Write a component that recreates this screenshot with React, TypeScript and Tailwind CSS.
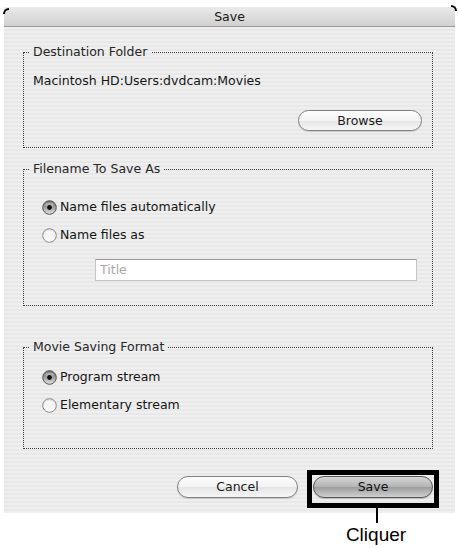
const Radio = ({ checked = false }: { checked?: boolean }) => (
  <svg width="15" height="15" viewBox="0 0 15 15" className="shrink-0">
    <defs>
      <linearGradient id="radio-on" x1="0" y1="0" x2="0" y2="1">
        <stop offset="0" stopColor="#6a6a6a" />
        <stop offset="0.5" stopColor="#a0a0a0" />
        <stop offset="1" stopColor="#e4e4e4" />
      </linearGradient>
      <linearGradient id="radio-off" x1="0" y1="0" x2="0" y2="1">
        <stop offset="0" stopColor="#dcdcdc" />
        <stop offset="0.5" stopColor="#f4f4f4" />
        <stop offset="1" stopColor="#ffffff" />
      </linearGradient>
    </defs>
    <circle
      cx="7.5"
      cy="7.5"
      r="6.8"
      fill={checked ? "url(#radio-on)" : "url(#radio-off)"}
      stroke={checked ? "#555555" : "#8a8a8a"}
      strokeWidth="1"
    />
    <ellipse cx="7.5" cy="4.6" rx="4" ry="2.2" fill="#ffffff" opacity={checked ? 0.35 : 0.6} />
    {checked && <circle cx="7.5" cy="7.5" r="2.4" fill="#111" />}
  </svg>
);

const RadioRow = ({ label, checked }: { label: string; checked?: boolean }) => (
  <div className="flex h-[20px] items-center gap-[3px] pl-[18px]">
    <Radio checked={checked} />
    <span className="leading-[16px]">{label}</span>
  </div>
);

const App = () => {
  return (
    <div className="relative h-[548px] w-[459px] overflow-hidden bg-white pl-[4px] pt-[7px] font-['DejaVu_Sans',sans-serif] text-[12.5px] text-[#151515]">
      <div className="relative flex h-[506px] w-[451px] flex-col bg-[image:repeating-linear-gradient(to_bottom,#efefef_0px,#efefef_2px,#e8e8e8_2px,#e8e8e8_4px)]">
        {/* window corners */}
        <span className="absolute -left-[1px] top-[1px] h-[6px] w-[6px] rounded-tl-[6px] border-l-2 border-t-2 border-black" />
        <span className="absolute -right-[2px] -top-[2px] h-[6px] w-[6px] rounded-tr-[6px] border-r-2 border-t-2 border-black" />

        {/* title bar */}
        <div className="flex h-[20px] items-center justify-center rounded-t-[4px] border-b border-[#9a9a9a] bg-gradient-to-b from-[#eaeaea] to-[#d0d0d0]">
          <span className="leading-[16px] text-[#1a1a1a]">Save</span>
        </div>

        <div className="flex flex-col pl-[19px]">
          {/* Destination Folder */}
          <fieldset className="mt-[17px] w-[410px] border border-dotted border-[#3c3c3c] pb-[16px]">
            <legend className="ml-[5px] px-[4px] leading-[16px] text-[#262626]">Destination Folder</legend>
            <div className="mt-[13px] pl-[9px] leading-[16px]">Macintosh HD:Users:dvdcam:Movies</div>
            <div className="mt-[21px] flex justify-end pr-[10px]">
              <button className="h-[21px] w-[124px] rounded-full border border-[#808080] bg-[linear-gradient(to_bottom,#fdfdfd_0%,#f3f3f3_50%,#e5e5e5_52%,#f7f7f7_100%)] leading-[16px] text-[#1a1a1a] shadow-[0_1px_1px_rgba(0,0,0,0.15)]">
                Browse
              </button>
            </div>
          </fieldset>

          {/* Filename To Save As */}
          <fieldset className="mt-[13px] w-[410px] border border-dotted border-[#3c3c3c] pb-[24px]">
            <legend className="ml-[5px] px-[4px] leading-[16px] text-[#262626]">Filename To Save As</legend>
            <div className="mt-[20px]">
              <RadioRow label="Name files automatically" checked />
            </div>
            <div className="mt-[8px]">
              <RadioRow label="Name files as" />
            </div>
            <div className="ml-[71px] mt-[14px] flex h-[22px] w-[322px] items-center border border-[#c4c4c4] border-t-[#9c9c9c] bg-white pl-[4px] text-[#a9a9a9]">
              Title
            </div>
          </fieldset>

          {/* Movie Saving Format */}
          <fieldset className="mt-[33px] w-[410px] border border-dotted border-[#3c3c3c] pb-[33px]">
            <legend className="ml-[5px] px-[4px] leading-[16px] text-[#262626]">Movie Saving Format</legend>
            <div className="mt-[12px]">
              <RadioRow label="Program stream" checked />
            </div>
            <div className="mt-[8px]">
              <RadioRow label="Elementary stream" />
            </div>
          </fieldset>

          {/* Buttons */}
          <div className="mt-[27px] flex w-[410px] justify-end gap-[15px]">
            <button className="h-[22px] w-[121px] rounded-full border border-[#808080] bg-[linear-gradient(to_bottom,#fdfdfd_0%,#f3f3f3_50%,#e5e5e5_52%,#f7f7f7_100%)] leading-[16px] text-[#1a1a1a] shadow-[0_1px_1px_rgba(0,0,0,0.15)]">
              Cancel
            </button>
            <div className="relative">
              <button className="h-[22px] w-[120px] rounded-full border border-[#555555] bg-[linear-gradient(to_bottom,#d6d6d6_0%,#b3b3b3_50%,#9d9d9d_52%,#d0d0d0_100%)] leading-[16px] text-[#111] shadow-[0_1px_1px_rgba(0,0,0,0.2)]">
                Save
              </button>
              {/* annotation */}
              <div className="pointer-events-none absolute -bottom-[10px] -left-[6px] -right-[6px] -top-[6px] border-[5px] border-black" />
              <div className="absolute left-[63px] top-[32px] h-[15px] w-[2px] bg-black" />
              <div className="absolute left-[63px] top-[48px] -translate-x-1/2 whitespace-nowrap font-['Liberation_Sans',Arial,sans-serif] text-[19px] leading-[22px] text-black">
                Cliquer
              </div>
            </div>
          </div>
        </div>
      </div>
    </div>
  );
};

export default App;
